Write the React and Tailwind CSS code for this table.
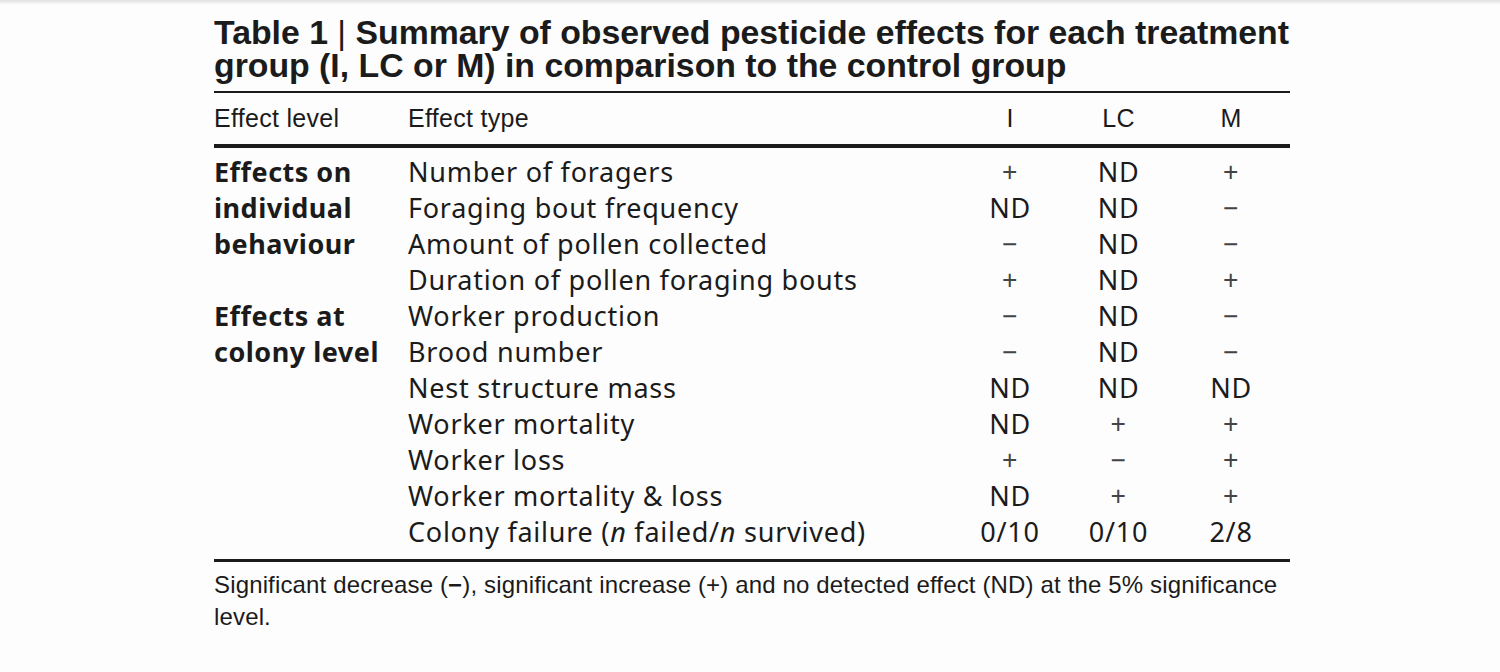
import React from "react";

const rows = [
  ["Number of foragers", "+", "ND", "+"],
  ["Foraging bout frequency", "ND", "ND", "−"],
  ["Amount of pollen collected", "−", "ND", "−"],
  ["Duration of pollen foraging bouts", "+", "ND", "+"],
  ["Worker production", "−", "ND", "−"],
  ["Brood number", "−", "ND", "−"],
  ["Nest structure mass", "ND", "ND", "ND"],
  ["Worker mortality", "ND", "+", "+"],
  ["Worker loss", "+", "−", "+"],
  ["Worker mortality & loss", "ND", "+", "+"],
];

const grot = { fontFamily: '"Liberation Sans", Arial, sans-serif' };
const body = { fontFamily: '"Noto Sans", "Open Sans", sans-serif' };

function Cell({ v }) {
  const sym = v === "+" || v === "−";
  return (
    <div className={"text-center " + (sym ? "text-[#444]" : "")}>{v}</div>
  );
}

export default function App() {
  return (
    <div className="min-h-[672px] w-[1500px] bg-[#fdfdfd] text-[#1b1b1b]">
      <div className="h-[5px] bg-gradient-to-b from-[#e2e2e2] to-[#fdfdfd]" />
      <div className="ml-[214px] w-[1076px] pt-[11px]">
        <h1
          className="text-[33.8px] font-bold leading-[33px] whitespace-nowrap"
          style={grot}
        >
          <div>
            Table 1 <span className="font-normal">|</span> Summary of observed pesticide effects for each treatment
          </div>
          <div>group (I, LC or M) in comparison to the control group</div>
        </h1>
        <div className="mt-[9px] h-[2px] bg-[#1b1b1b]" />
        <div
          className="grid grid-cols-[194px_547px_110px_107px_118px] text-[25px] leading-[51px] tracking-[0.3px]"
          style={grot}
        >
          <div>Effect level</div>
          <div>Effect type</div>
          <div className="text-center">I</div>
          <div className="text-center">LC</div>
          <div className="text-center">M</div>
        </div>
        <div className="h-[4px] bg-[#1b1b1b]" />
        <div
          className="grid grid-cols-[194px_547px_110px_107px_118px] pt-[6px] pb-[9px] text-[27px] leading-[36px] tracking-[0.75px]"
          style={body}
        >
          {rows.map((r, i) => (
            <React.Fragment key={i}>
              {i === 0 && (
                <div className="row-span-4 font-bold tracking-[0.5px]">
                  Effects on
                  <br />
                  individual
                  <br />
                  behaviour
                </div>
              )}
              {i === 4 && (
                <div className="row-span-7 font-bold tracking-[0.5px]">
                  Effects at
                  <br />
                  colony level
                </div>
              )}
              <div>{r[0]}</div>
              <Cell v={r[1]} />
              <Cell v={r[2]} />
              <Cell v={r[3]} />
            </React.Fragment>
          ))}
          <div>
            Colony failure (<i>n</i> failed/<i>n</i> survived)
          </div>
          <div className="text-center">0/10</div>
          <div className="text-center">0/10</div>
          <div className="text-center">2/8</div>
        </div>
        <div className="h-[3px] bg-[#1b1b1b]" />
        <p className="mt-[7px] text-[24px] leading-[32px] tracking-[0.15px]" style={grot}>
          Significant decrease (<b>−</b>), significant increase (+) and no detected effect (ND) at the 5% significance level.
        </p>
      </div>
    </div>
  );
}
